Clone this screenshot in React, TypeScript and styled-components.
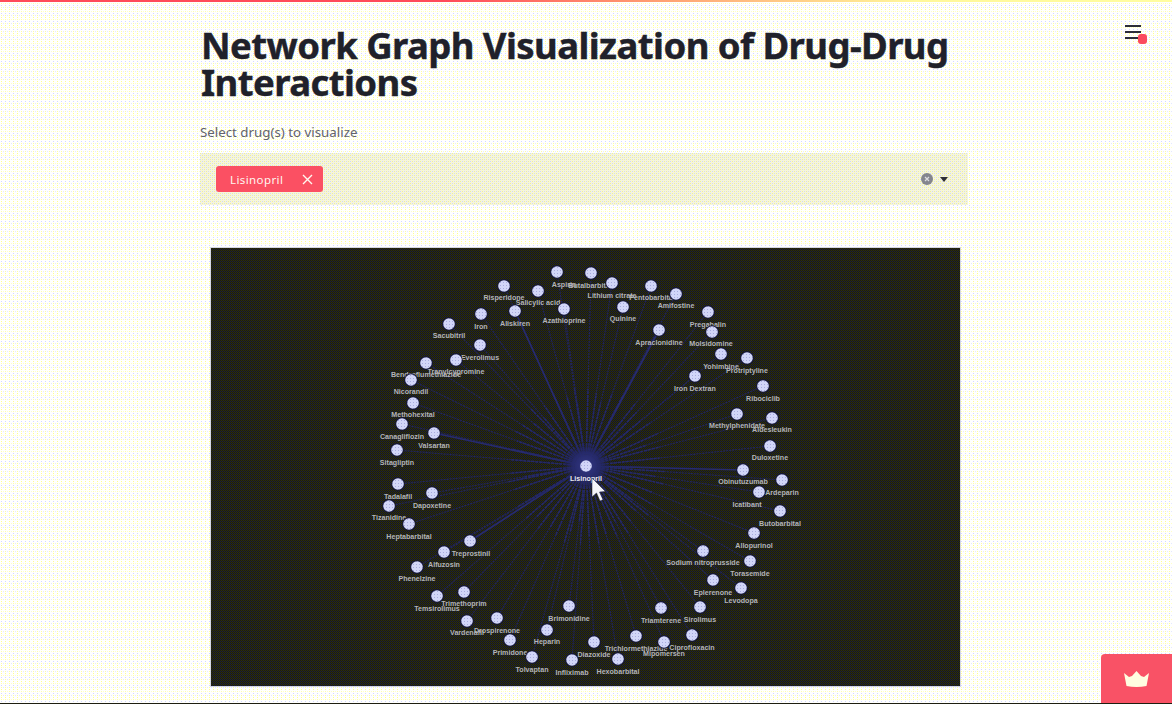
import React from "react";
import styled, { createGlobalStyle } from "styled-components";

const GlobalStyle = createGlobalStyle`
  html, body { margin: 0; padding: 0; height: 100%; overflow: hidden; background: #fff; }
  #root { height: 100%; }
`;

// A small vector tile that reproduces the screenshot's dithered fills.
const tile = (w: number, h: number, base: string, dots: [number, number, string][]) => {
  const rects = dots
    .map(([x, y, c]) => `<rect x='${x}' y='${y}' width='1' height='1' fill='${c}'/>`)
    .join("");
  const svg = `<svg xmlns='http://www.w3.org/2000/svg' width='${w}' height='${h}' shape-rendering='crispEdges'><rect width='${w}' height='${h}' fill='${base}'/>${rects}</svg>`;
  return `url("data:image/svg+xml,${encodeURIComponent(svg)}")`;
};

const pageTile = tile(4, 8, "#ffffff", [
  [1, 1, "#ffff8c"],
  [1, 3, "#ffffa8"],
  [1, 5, "#d4d8ff"],
  [1, 7, "#ffff9c"],
  [3, 3, "#ffffc8"],
  [3, 7, "#e4e8ff"],
]);

const selectTile = tile(4, 4, "#f6f6da", [
  [0, 0, "#eeee9e"],
  [2, 2, "#eeee9e"],
  [2, 0, "#d4d8f4"],
  [0, 2, "#d4d8f4"],
]);

const graphTile = tile(2, 2, "#1e1f0b", [
  [0, 0, "#2b2c10"],
  [1, 1, "#1b1f3c"],
]);

const Page = styled.div`
  position: relative;
  display: flex;
  flex-direction: column;
  height: 704px;
  overflow: hidden;
  background: ${pageTile};
  font-family: "Noto Sans", "Liberation Sans", sans-serif;
`;

const Decoration = styled.div`
  height: 2px;
  flex: none;
  background: linear-gradient(90deg, #ff4b5a 0%, #ff4b5a 38%, #ff9a70 55%, #fff79a 78%, #fffda0 100%);
`;

const Main = styled.main`
  flex: 1;
  min-height: 0;
  padding: 25px 0 0 200px;
`;

const Column = styled.div`
  width: 768px;
  display: flex;
  flex-direction: column;
`;

const Title = styled.h1`
  margin: 0 0 0 1px;
  font-family: "Noto Sans", sans-serif;
  font-size: 36.5px;
  line-height: 37px;
  font-weight: 700;
  color: #20212a;
  letter-spacing: -0.58px;
  -webkit-text-stroke: 0.4px #20212a;
`;

const FieldLabel = styled.label`
  display: block;
  margin-top: 22px;
  font-size: 13.3px;
  line-height: 18px;
  color: #62636c;
`;

const SelectBox = styled.div`
  margin-top: 12px;
  height: 52px;
  padding: 0 20px 0 16px;
  box-sizing: border-box;
  display: flex;
  align-items: center;
  justify-content: space-between;
  background: ${selectTile};
`;

const Tag = styled.div`
  width: 107px;
  height: 26px;
  border-radius: 3px;
  background: #fb5063;
  color: #fff6f0;
  display: flex;
  align-items: center;
  justify-content: space-between;
  padding: 0 10px 0 14px;
  box-sizing: border-box;
  font-size: 11.5px;
  letter-spacing: 0.4px;
`;

const Controls = styled.div`
  display: flex;
  align-items: center;
  gap: 7px;
`;

const GraphFrame = styled.div`
  margin: 42px 0 0 10px;
  width: 751px;
  height: 440px;
  flex: none;
  box-sizing: border-box;
  border: 1px solid #d4d6e4;
  background: ${graphTile};
  overflow: hidden;
`;

const GraphSvg = styled.svg`
  display: block;
  width: 749px;
  height: 438px;
`;

const NodeLabel = styled.text`
  font-family: "Liberation Sans", sans-serif;
  font-size: 7.1px;
  font-weight: 700;
  fill: #b4b4b8;
  text-anchor: middle;
`;

const HubLabel = styled(NodeLabel)`
  fill: #e8e8f0;
`;

const MenuButton = styled.button`
  position: absolute;
  top: 23px;
  left: 1125px;
  width: 22px;
  height: 22px;
  padding: 0;
  border: 0;
  background: none;
`;

const MenuBar = styled.span`
  display: block;
  width: 16px;
  height: 2px;
  margin-bottom: 4px;
  background: #2c2d3a;
`;

const MenuBadge = styled.span`
  position: absolute;
  left: 13px;
  top: 11px;
  width: 9px;
  height: 10px;
  border-radius: 3px;
  background: #fb4b5e;
`;

const CrownButton = styled.button`
  position: absolute;
  right: 0;
  bottom: 0;
  width: 71px;
  height: 50px;
  padding: 0;
  border: 0;
  border-top-left-radius: 4px;
  background: #f95266;
  display: flex;
  align-items: center;
  justify-content: center;
`;

const BottomLine = styled.div`
  position: absolute;
  left: 0;
  right: 0;
  bottom: 0;
  height: 1px;
  background: #1e1e10;
`;

type N = [string, number, number, number, number, number?];
const nodes: N[] = [
  ["Aspirin", 557, 272, 564, 287],
  ["Butalbarbital", 591, 273, 590, 288],
  ["Lithium citrate", 612, 283, 612, 298],
  ["Pentobarbital", 651, 286, 652, 300],
  ["Amifostine", 676, 294, 676, 308],
  ["Risperidone", 504, 286, 504, 300],
  ["Salicylic acid", 538, 291, 538, 305],
  ["Aliskiren", 515, 311, 515, 326, 1],
  ["Azathioprine", 564, 309, 564, 323],
  ["Quinine", 623, 307, 623, 321],
  ["Iron", 481, 314, 481, 329],
  ["Sacubitril", 449, 324, 449, 338],
  ["Apraclonidine", 659, 330, 659, 345, 1],
  ["Pregabalin", 708, 312, 708, 327],
  ["Molsidomine", 712, 332, 711, 346],
  ["Everolimus", 480, 345, 480, 360],
  ["Tranylcypromine", 456, 360, 456, 374],
  ["Bendroflumethiazide", 426, 363, 426, 377],
  ["Nicorandil", 411, 380, 411, 394],
  ["Methohexital", 413, 403, 413, 417],
  ["Canagliflozin", 402, 424, 402, 439],
  ["Valsartan", 434, 433, 434, 448, 1],
  ["Sitagliptin", 397, 450, 397, 465],
  ["Tadalafil", 398, 484, 398, 499],
  ["Dapoxetine", 432, 493, 432, 508],
  ["Tizanidine", 389, 506, 389, 520],
  ["Heptabarbital", 409, 524, 409, 539],
  ["Treprostinil", 470, 541, 471, 556, 1],
  ["Alfuzosin", 444, 552, 444, 567],
  ["Phenelzine", 417, 567, 417, 581],
  ["Trimethoprim", 464, 592, 464, 606],
  ["Temsirolimus", 437, 596, 437, 611],
  ["Vardenafil", 467, 621, 467, 635],
  ["Drospirenone", 497, 618, 497, 633],
  ["Primidone", 510, 640, 510, 655],
  ["Tolvaptan", 532, 657, 532, 672],
  ["Heparin", 547, 630, 547, 644],
  ["Brimonidine", 569, 606, 569, 621],
  ["Infliximab", 572, 660, 572, 675],
  ["Diazoxide", 594, 642, 594, 657],
  ["Hexobarbital", 618, 659, 618, 674],
  ["Trichlormethiazide", 636, 636, 636, 651],
  ["Mipomersen", 664, 642, 664, 656],
  ["Triamterene", 661, 608, 661, 623],
  ["Sirolimus", 700, 607, 700, 622],
  ["Ciprofloxacin", 692, 635, 692, 650],
  ["Levodopa", 741, 588, 741, 603],
  ["Eplerenone", 713, 580, 713, 595],
  ["Torasemide", 750, 561, 750, 576],
  ["Sodium nitroprusside", 703, 551, 703, 565],
  ["Allopurinol", 754, 533, 754, 548],
  ["Butobarbital", 780, 511, 780, 526],
  ["Icatibant", 759, 492, 747, 507],
  ["Ardeparin", 782, 480, 782, 495],
  ["Obinutuzumab", 743, 470, 743, 484, 1],
  ["Duloxetine", 770, 446, 770, 460],
  ["Methylphenidate", 737, 414, 737, 428],
  ["Aldesleukin", 772, 418, 772, 432],
  ["Ribociclib", 763, 386, 763, 401],
  ["Iron Dextran", 695, 376, 695, 391],
  ["Protriptyline", 747, 358, 747, 373],
  ["Yohimbine", 721, 354, 721, 369],
];

// graph coordinates are given in page pixels; the drawing's origin is the inside of the frame
const OX = 211;
const OY = 248;
const HX = 586 - OX;
const HY = 466 - OY;

const Crown = () => (
  <svg width="27" height="17" viewBox="0 0 27 17" aria-hidden="true">
    <path d="M1 2 L6 6 L9 5 L13.5 0 L18 5 L21 6 L26 2 L23.5 15 Q13.5 17 3.5 15 Z" fill="#fffde0" />
  </svg>
);

const CloseGlyph = () => (
  <svg width="11" height="11" viewBox="0 0 11 11" aria-hidden="true">
    <path d="M1 1 L10 10 M10 1 L1 10" stroke="#fff8f0" strokeWidth="1.4" />
  </svg>
);

const ClearGlyph = () => (
  <svg width="12" height="12" viewBox="0 0 12 12" aria-hidden="true">
    <circle cx="6" cy="6" r="6" fill="#84858f" />
    <path d="M4 4 L8 8 M8 4 L4 8" stroke="#dcdce0" strokeWidth="1.2" />
  </svg>
);

const Caret = () => (
  <svg width="8" height="5" viewBox="0 0 8 5" aria-hidden="true">
    <path d="M0 0 H8 L4 5 Z" fill="#2e2f3a" />
  </svg>
);

const Graph = () => (
  <GraphSvg viewBox="0 0 749 438" role="img" aria-label="Network graph">
    <defs>
      <pattern id="nodeDither" width="3" height="3" patternUnits="userSpaceOnUse">
        <rect width="3" height="3" fill="#d2d6f8" />
        <rect x="1" y="1" width="1" height="1" fill="#a8abde" />
      </pattern>
      <radialGradient id="hubGlow">
        <stop offset="0%" stopColor="#343884" stopOpacity="1" />
        <stop offset="55%" stopColor="#262a6c" stopOpacity="0.9" />
        <stop offset="100%" stopColor="#1e2050" stopOpacity="0" />
      </radialGradient>
    </defs>
    {nodes.map(([name, x, y, , , strong]) => (
      <g key={name}>
        <line
          x1={HX}
          y1={HY}
          x2={x - OX}
          y2={y - OY}
          stroke={strong ? "#272b70" : "#22265f"}
          strokeWidth={strong ? 1.7 : 1.1}
          strokeDasharray={strong ? undefined : "2 1"}
        />
        <line
          x1={HX}
          y1={HY}
          x2={HX + (x - OX - HX) * 0.4}
          y2={HY + (y - OY - HY) * 0.4}
          stroke="#252968"
          strokeWidth="1.5"
          strokeDasharray="3 1"
        />
      </g>
    ))}
    <circle cx={HX} cy={HY} r="24" fill="url(#hubGlow)" />
    {nodes.map(([name, x, y, lx, ly]) => (
      <g key={name}>
        <circle cx={x - OX} cy={y - OY} r="6.8" fill="#14163a" />
        <circle cx={x - OX} cy={y - OY} r="5.8" fill="url(#nodeDither)" />
        <NodeLabel x={lx - OX} y={ly - OY}>{name}</NodeLabel>
      </g>
    ))}
    <circle cx={HX} cy={HY} r="5.8" fill="url(#nodeDither)" />
    <HubLabel x={HX} y={481 - OY}>Lisinopril</HubLabel>
    <path
      d={`M${592 - OX} ${478 - OY} l0 19 l4.5 -4 l3.5 8 l3 -1.3 l-3.5 -7.7 l6 -0.5 Z`}
      fill="#f4f4f8"
      stroke="#14163a"
      strokeWidth="0.5"
    />
  </GraphSvg>
);

export default function App() {
  return (
    <Page>
      <GlobalStyle />
      <Decoration />
      <Main>
        <Column>
          <Title>Network Graph Visualization of Drug-Drug Interactions</Title>
          <FieldLabel>Select drug(s) to visualize</FieldLabel>
          <SelectBox>
            <Tag>
              <span>Lisinopril</span>
              <CloseGlyph />
            </Tag>
            <Controls>
              <ClearGlyph />
              <Caret />
            </Controls>
          </SelectBox>
          <GraphFrame>
            <Graph />
          </GraphFrame>
        </Column>
      </Main>
      <MenuButton aria-label="Menu">
        <MenuBar />
        <MenuBar />
        <MenuBar />
        <MenuBadge />
      </MenuButton>
      <CrownButton aria-label="Upgrade">
        <Crown />
      </CrownButton>
      <BottomLine />
    </Page>
  );
}
